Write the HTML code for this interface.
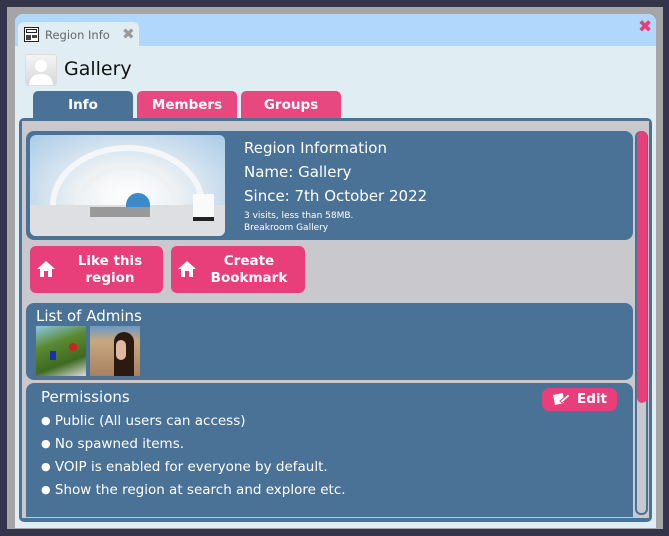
<!DOCTYPE html>
<html><head><style>
*{margin:0;padding:0;box-sizing:border-box}
body{width:669px;height:536px;background:#34344a;position:relative;overflow:hidden;font-family:"DejaVu Sans","Liberation Sans",sans-serif}
.abs{position:absolute}
.gray{left:7px;top:7px;width:656px;height:522px;background:#a5a5a8}
.win{left:15px;top:14px;width:641px;height:514px;background:#e0eef4;border-radius:8px 8px 0 0;overflow:hidden}
.title{left:0;top:0;width:641px;height:32px;background:#b0d8fc}
.tab{left:3px;top:8px;width:121px;height:26px;background:#e0eef4;border-radius:6px 6px 0 0;font-size:11.5px;color:#666}
.pnl{left:19px;top:118px;width:633px;height:404px;background:#4a7297;border-radius:5px}
.inner{left:22px;top:121px;width:627px;height:397px;background:#c9c9cd}
.card{background:#4a7297;border-radius:8px;color:#fff}
.btn{background:#e83e7a;border-radius:6px;color:#fff;font-weight:bold;font-size:13.5px;text-align:center;line-height:17px}
.t{font-weight:bold;font-size:13.5px;color:#fff;text-align:center;border-radius:5px 5px 0 0}
.b{font-size:11px;vertical-align:1px;line-height:0}
.ln{height:23px;line-height:23px}
</style></head><body>
<div class="abs gray"></div>
<div class="abs win">
 <div class="abs title"></div>
 <div class="abs tab">
  <svg class="abs" style="left:6px;top:5px" width="15" height="15" viewBox="0 0 15 15"><rect x="0.5" y="0.5" width="14" height="14" fill="#fff" stroke="#222"/><rect x="2.5" y="2.5" width="10" height="3" fill="none" stroke="#222"/><rect x="2" y="8" width="5" height="5" fill="#444"/><rect x="8" y="8" width="5" height="3" fill="#444"/></svg>
  <span class="abs" style="left:27px;top:6px">Region Info</span>
  <span class="abs" style="left:104px;top:3px;font-size:15px;font-weight:bold;color:#999">✖</span>
 </div>
 <span class="abs" style="left:623px;top:3px;font-size:17px;font-weight:bold;color:#e83e7a">✖</span>
 <div class="abs" style="left:10px;top:40px;width:32px;height:32px;background:linear-gradient(#f4f4f4,#d8d8d8);border:1px solid #ddd;border-radius:3px">
  <svg width="30" height="30" viewBox="0 0 30 30"><circle cx="15" cy="11" r="6" fill="#fff"/><path d="M3 30 Q4 19 15 19 Q26 19 27 30Z" fill="#fff"/></svg>
 </div>
 <span class="abs" style="left:49px;top:44px;font-size:19px;color:#111">Gallery</span>
</div>
<div class="abs t" style="left:33px;top:91px;width:100px;height:28px;background:#4a7297;line-height:28px">Info</div>
<div class="abs t" style="left:137px;top:91px;width:100px;height:28px;background:#e84880;line-height:28px">Members</div>
<div class="abs t" style="left:241px;top:91px;width:100px;height:28px;background:#e84880;line-height:28px">Groups</div>
<div class="abs pnl"></div>
<div class="abs inner"></div>
<div class="abs" style="left:635px;top:131px;width:13px;height:384px;background:#c9c9cd;border:2px solid #4a7297;border-radius:6px"></div>
<div class="abs" style="left:637px;top:131px;width:10px;height:272px;background:#e83e7a;border-radius:5px"></div>
<div class="abs card" style="left:26px;top:131px;width:607px;height:109px">
 <div class="abs" style="left:4px;top:4px;width:195px;height:101px;border-radius:6px;overflow:hidden;background:radial-gradient(ellipse at 50% 60%,#fff 0%,#eef2f4 35%,#c8dced 70%,#a8cce8 100%)">
  <div class="abs" style="left:20px;top:10px;width:155px;height:120px;border:6px solid #f4f6f8;border-radius:50%"></div>
  <div class="abs" style="left:45px;top:30px;width:105px;height:90px;border:5px solid #eef0f2;border-radius:50%"></div>
  <div class="abs" style="left:0;top:70px;width:195px;height:31px;background:#dedfe2"></div>
  <div class="abs" style="left:60px;top:72px;width:60px;height:10px;background:#999"></div>
  <div class="abs" style="left:96px;top:58px;width:24px;height:14px;background:#3a8acc;border-radius:12px 12px 0 0"></div>
  <div class="abs" style="left:163px;top:59px;width:21px;height:25px;background:#fafafa"></div>
  <div class="abs" style="left:163px;top:82px;width:21px;height:4px;background:#222"></div>
 </div>
 <div class="abs" style="left:218px;top:8px;font-size:15px">Region Information</div>
 <div class="abs" style="left:218px;top:32px;font-size:15px">Name: Gallery</div>
 <div class="abs" style="left:218px;top:56px;font-size:15px">Since: 7th October 2022</div>
 <div class="abs" style="left:218px;top:79px;font-size:9px;line-height:12px">3 visits, less than 58MB.<br>Breakroom Gallery</div>
</div>
<div class="abs btn" style="left:30px;top:246px;width:133px;height:47px">
 <svg class="abs" style="left:7px;top:14px" width="18" height="18" viewBox="0 0 18 18"><path d="M9 1 L18 9 L15 9 L15 17 L3 17 L3 9 L0 9Z" fill="#fff"/><rect x="7" y="11" width="4" height="6" fill="#e83e7a"/></svg>
 <div class="abs" style="left:33px;top:7px;width:94px">Like this<br>region</div>
</div>
<div class="abs btn" style="left:171px;top:246px;width:134px;height:47px">
 <svg class="abs" style="left:7px;top:14px" width="18" height="18" viewBox="0 0 18 18"><path d="M9 1 L18 9 L15 9 L15 17 L3 17 L3 9 L0 9Z" fill="#fff"/><rect x="7" y="11" width="4" height="6" fill="#e83e7a"/></svg>
 <div class="abs" style="left:30px;top:7px;width:96px">Create<br>Bookmark</div>
</div>
<div class="abs card" style="left:26px;top:303px;width:607px;height:77px">
 <div class="abs" style="left:10px;top:4px;font-size:15px">List of Admins</div>
 <div class="abs" style="left:10px;top:23px;width:50px;height:50px;background:linear-gradient(160deg,#8ec8e8 0%,#5a8a30 35%,#3f6a20 70%,#ddd 100%)"><div class="abs" style="left:33px;top:17px;width:8px;height:8px;background:#d02020;border-radius:4px"></div><div class="abs" style="left:14px;top:25px;width:6px;height:9px;background:#1a30b0"></div></div>
 <div class="abs" style="left:64px;top:23px;width:50px;height:50px;background:linear-gradient(#6a98c8 0%,#c8a880 30%,#a88060 100%)"><div class="abs" style="left:24px;top:6px;width:20px;height:44px;background:#2a1a10;border-radius:10px 10px 0 0"></div><div class="abs" style="left:26px;top:14px;width:10px;height:20px;background:#e0b8a0;border-radius:5px"></div></div>
</div>
<div class="abs card" style="left:26px;top:383px;width:607px;height:134px;border-radius:8px 8px 0 0">
 <div class="abs" style="left:15px;top:5px;font-size:15px">Permissions</div>
 <div class="abs btn" style="left:516px;top:5px;width:75px;height:23px;line-height:23px;border-radius:7px">
  <svg class="abs" style="left:10px;top:4px" width="18" height="15" viewBox="0 0 18 15"><path d="M1 3 L11 1 L12 11 L3 13Z" fill="#fff"/><path d="M8 9 L16 2 L18 4 L10 11Z" fill="#fff" stroke="#e83e7a" stroke-width="1"/></svg>
  <span class="abs" style="left:35px;top:0">Edit</span>
 </div>
 <div class="abs" style="left:15px;top:27px;font-size:13.5px">
  <div class="ln"><span class="b">●</span> Public (All users can access)</div>
  <div class="ln"><span class="b">●</span> No spawned items.</div>
  <div class="ln"><span class="b">●</span> VOIP is enabled for everyone by default.</div>
  <div class="ln"><span class="b">●</span> Show the region at search and explore etc.</div>
 </div>
</div>
</body></html>
